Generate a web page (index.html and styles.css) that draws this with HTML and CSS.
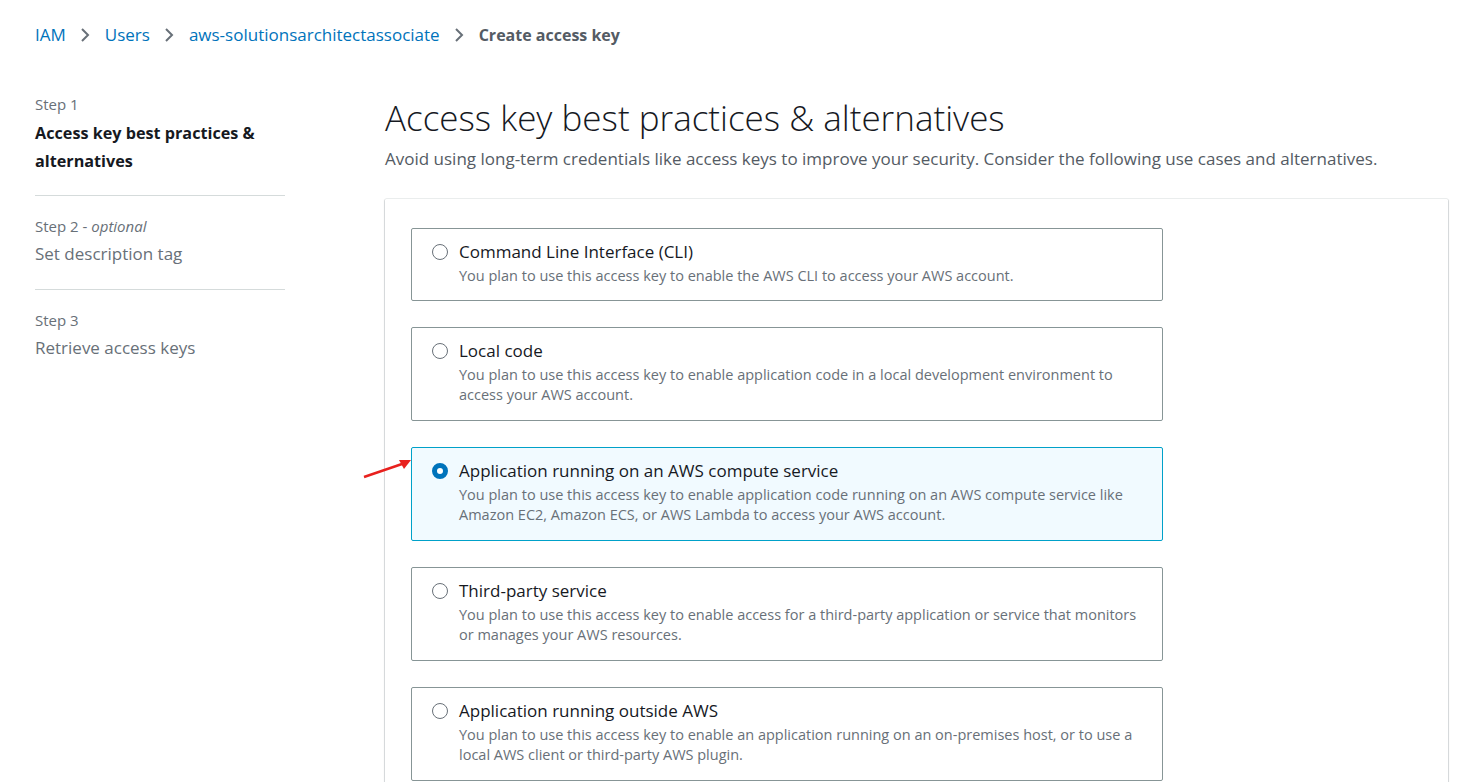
FILE: index.html
```html
<!DOCTYPE html>
<html>
<head>
<meta charset="utf-8">
<link rel="stylesheet" href="styles.css">
</head>
<body>
<nav class="breadcrumbs">
  <a class="crumb link" href="#">IAM</a>
  <svg class="chev" viewBox="0 0 16 16" width="16" height="16"><path d="M5 2l6 6-6 6" fill="none" stroke="#687078" stroke-width="2"/></svg>
  <a class="crumb link" href="#">Users</a>
  <svg class="chev" viewBox="0 0 16 16" width="16" height="16"><path d="M5 2l6 6-6 6" fill="none" stroke="#687078" stroke-width="2"/></svg>
  <a class="crumb link" href="#">aws-solutionsarchitectassociate</a>
  <svg class="chev" viewBox="0 0 16 16" width="16" height="16"><path d="M5 2l6 6-6 6" fill="none" stroke="#687078" stroke-width="2"/></svg>
  <span class="crumb current">Create access key</span>
</nav>
<div class="layout">
  <aside class="steps">
    <div class="step">
      <div class="step-label">Step 1</div>
      <div class="step-title active">Access key best practices &amp; alternatives</div>
    </div>
    <div class="step">
      <div class="step-label">Step 2 - <i>optional</i></div>
      <div class="step-title">Set description tag</div>
    </div>
    <div class="step">
      <div class="step-label">Step 3</div>
      <div class="step-title">Retrieve access keys</div>
    </div>
  </aside>
  <main class="main">
    <h1 class="title">Access key best practices &amp; alternatives</h1>
    <p class="subtitle">Avoid using long-term credentials like access keys to improve your security. Consider the following use cases and alternatives.</p>
    <div class="container">
      <label class="card">
        <span class="radio"></span>
        <span class="card-text">
          <span class="card-title">Command Line Interface (CLI)</span>
          <span class="card-desc">You plan to use this access key to enable the AWS CLI to access your AWS account.</span>
        </span>
      </label>
      <label class="card">
        <span class="radio"></span>
        <span class="card-text">
          <span class="card-title">Local code</span>
          <span class="card-desc">You plan to use this access key to enable application code in a local development environment to access your AWS account.</span>
        </span>
      </label>
      <label class="card selected">
        <span class="radio checked"></span>
        <span class="card-text">
          <span class="card-title">Application running on an AWS compute service</span>
          <span class="card-desc">You plan to use this access key to enable application code running on an AWS compute service like Amazon EC2, Amazon ECS, or AWS Lambda to access your AWS account.</span>
        </span>
        <svg class="arrow" width="52" height="24" viewBox="0 0 52 24"><path d="M2 20 L40 7" stroke="#e8211e" stroke-width="2.4" fill="none"/><path d="M49 3 L37 3 L42 12 Z" fill="#e8211e"/></svg>
      </label>
      <label class="card">
        <span class="radio"></span>
        <span class="card-text">
          <span class="card-title">Third-party service</span>
          <span class="card-desc">You plan to use this access key to enable access for a third-party application or service that monitors or manages your AWS resources.</span>
        </span>
      </label>
      <label class="card">
        <span class="radio"></span>
        <span class="card-text">
          <span class="card-title">Application running outside AWS</span>
          <span class="card-desc">You plan to use this access key to enable an application running on an on-premises host, or to use a local AWS client or third-party AWS plugin.</span>
        </span>
      </label>
    </div>
  </main>
</div>
</body>
</html>
```

FILE: styles.css
```css
* { box-sizing: border-box; }
html, body { margin: 0; padding: 0; background: #fff; }
body {
  font-family: "Open Sans", "Liberation Sans", sans-serif;
  color: #16191f;
  overflow: hidden;
  height: 782px;
}
.breadcrumbs {
  display: flex;
  align-items: center;
  gap: 14px;
  padding: 21px 0 0 35px;
  height: 48px;
  font-size: 17px;
}
.chev { margin: 0 -2.5px; }
.link { color: #0073bb; text-decoration: none; }
.current { color: #545b64; font-weight: 700; font-size: 16px; }
.layout {
  display: grid;
  grid-template-columns: 250px 1fr;
  column-gap: 100px;
  padding: 0 12px 0 35px;
}
.steps { padding-top: 46px; }
.step { border-bottom: 1px solid #d5dbdb; padding: 0 0 20px; margin-bottom: 19px; }
.step:first-child .step-label { margin-top: -1px; margin-bottom: 4px; }
.step:nth-child(2) { padding-bottom: 21px; }
.step:last-child { border-bottom: none; }
.step-label { font-size: 15px; color: #687078; line-height: 22px; margin-bottom: 3px; }
.step-label i { font-style: italic; }
.step-title { font-size: 17px; color: #687078; line-height: 28px; }
.step-title.active { color: #16191f; font-weight: 700; font-size: 16.2px; }
.main { padding-top: 46px; }
.title {
  margin: 0;
  font-size: 35px;
  font-weight: 300;
  line-height: 48px;
  color: #16191f;
}
.subtitle {
  margin: 0;
  font-size: 17px;
  line-height: 22px;
  color: #545b64;
  padding-top: 6px;
}
.container {
  margin-top: 28px;
  background: #fff;
  border-radius: 2px;
  box-shadow: 0 1px 1px 0 rgba(0,28,36,.3), 1px 1px 1px 0 rgba(0,28,36,.15), -1px 1px 1px 0 rgba(0,28,36,.15);
  border-top: 1px solid #eaeded;
  padding: 29px 26px 40px;
  display: flex;
  flex-direction: column;
  gap: 26px;
}
.card {
  position: relative;
  width: 752px;
  display: flex;
  gap: 11px;
  padding: 11px 20px 15px 20px;
  border: 1px solid #879596;
  border-radius: 2px;
  background: #fff;
}
.card:first-child { padding-bottom: 14px; }
.card.selected { background: #f1faff; border-color: #00a1c9; }
.radio {
  flex: none;
  width: 16px;
  height: 16px;
  margin-top: 4px;
  border-radius: 50%;
  border: 1.5px solid #687078;
  background: #fff;
}
.radio.checked { border: 5px solid #0073bb; }
.card-text { display: flex; flex-direction: column; }
.card-title { font-size: 17px; line-height: 24px; color: #16191f; }
.card-desc { font-size: 14.5px; line-height: 20px; color: #687078; margin-top: 2px; }
.arrow { position: absolute; left: -50px; top: 9px; }
```
